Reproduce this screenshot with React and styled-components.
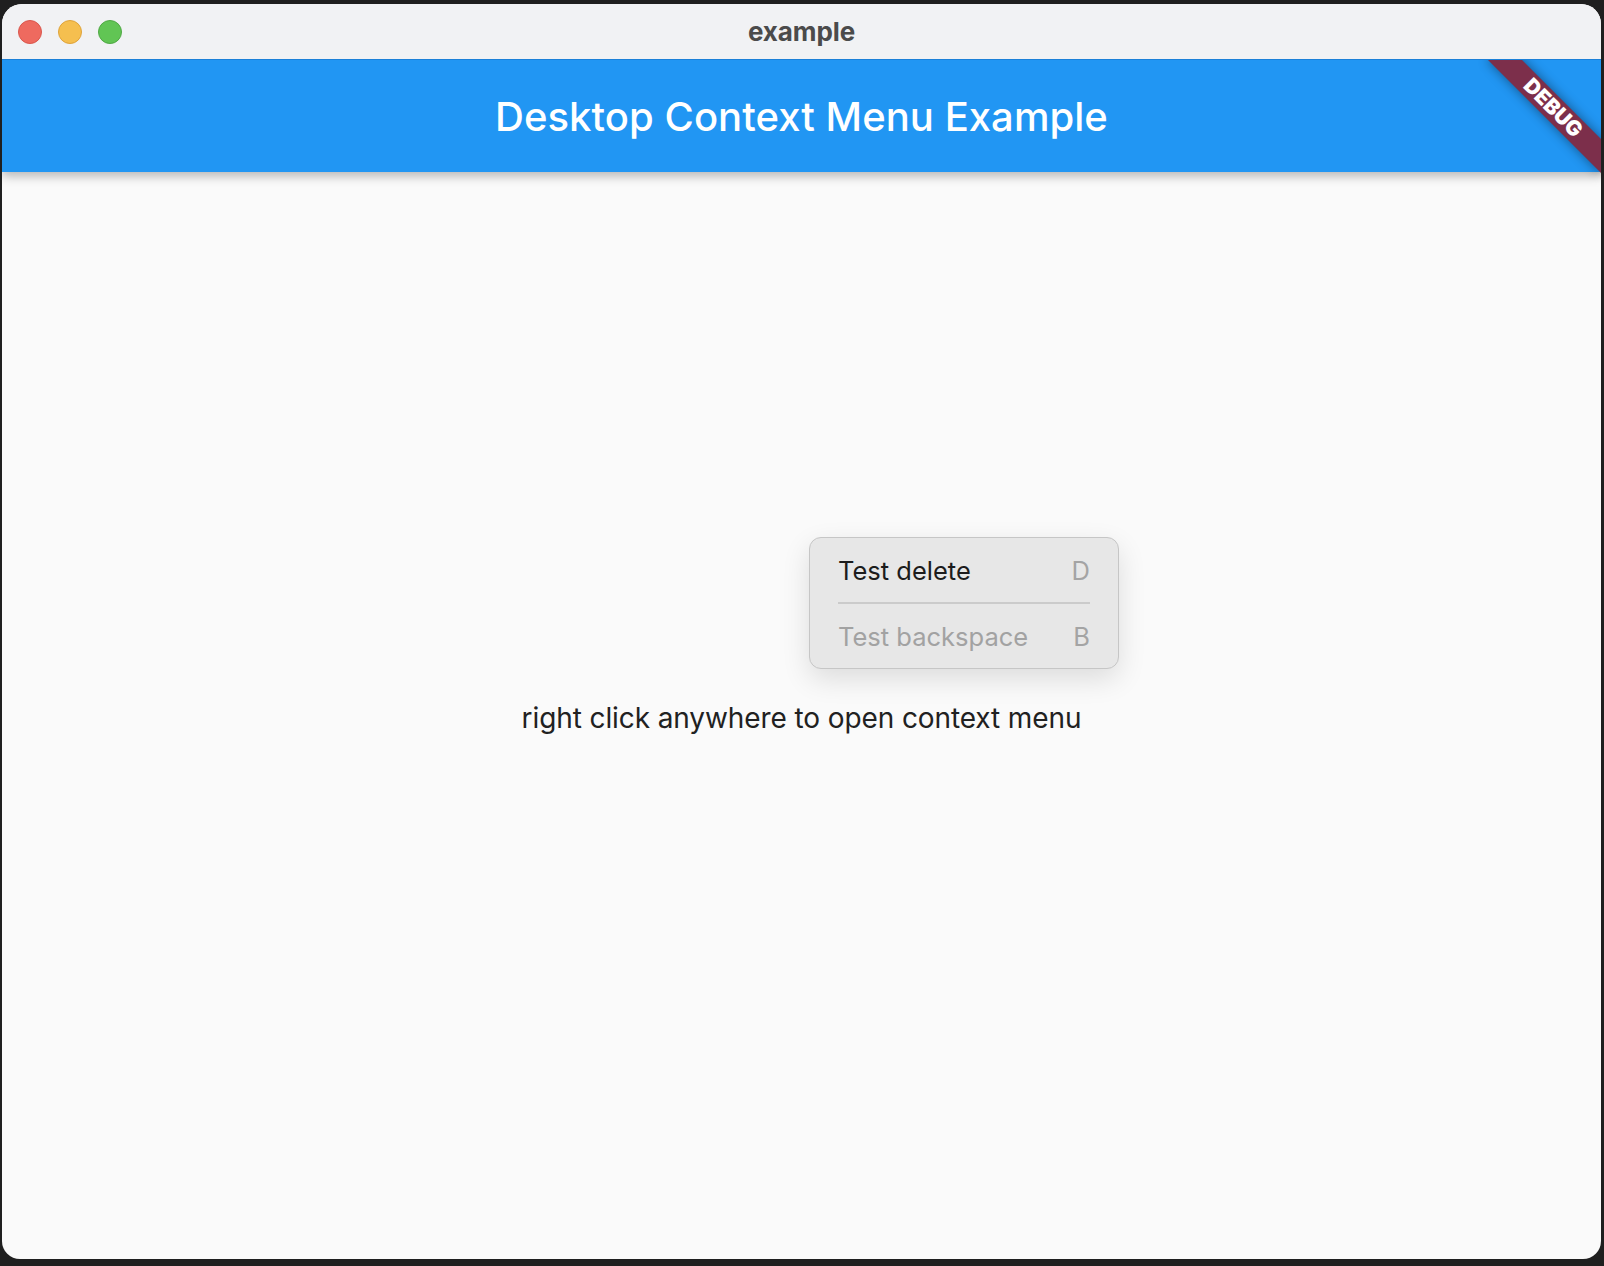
import React from 'react';
import styled, { createGlobalStyle } from 'styled-components';

const GlobalStyle = createGlobalStyle`
    html, body {
        margin: 0;
        padding: 0;
        background: #1f1f1f;
        font-family: Inter, "Noto Sans", sans-serif;
    }
`;

const lights = ['#ee6a5f', '#f5bf4f', '#61c554'];
const lightBorders = ['#d9574d', '#dea33b', '#50a845'];

const menuItems = [
    { label: 'Test delete', shortcut: 'D', disabled: false },
    { label: 'Test backspace', shortcut: 'B', disabled: true },
];

export default function App() {
    return (
        <>
            <GlobalStyle />
            <Window>
                <TitleBar>
                    <Lights>
                        {lights.map((c, i) => (
                            <Light key={c} $color={c} $border={lightBorders[i]} />
                        ))}
                    </Lights>
                    <WindowTitle>example</WindowTitle>
                    <span />
                </TitleBar>
                <Content>
                    <AppBar>
                        <AppTitle>Desktop Context Menu Example</AppTitle>
                    </AppBar>
                    <Body>
                        <Hint>right click anywhere to open context menu</Hint>
                    </Body>
                    <Menu>
                        {menuItems.map((item, i) => (
                            <React.Fragment key={item.label}>
                                {i > 0 && <Separator />}
                                <MenuRow>
                                    <MenuLabel $disabled={item.disabled}>{item.label}</MenuLabel>
                                    <Shortcut>{item.shortcut}</Shortcut>
                                </MenuRow>
                            </React.Fragment>
                        ))}
                    </Menu>
                    <Banner>DEBUG</Banner>
                </Content>
            </Window>
        </>
    );
}

const Window = styled.div`
    margin: 4px 3px 0 2px;
    width: 1599px;
    height: 1255px;
    border-radius: 20px 20px 18px 18px;
    overflow: hidden;
    display: flex;
    flex-direction: column;
    background: #fafafa;
`;

const TitleBar = styled.div`
    height: 56px;
    flex-shrink: 0;
    background: #f1f2f4;
    display: grid;
    grid-template-columns: 1fr auto 1fr;
    align-items: center;
    border-bottom: 1px solid #1b80d8;
    box-sizing: border-box;
`;

const Lights = styled.div`
    display: flex;
    gap: 16px;
    padding-left: 16px;
`;

const Light = styled.div`
    width: 24px;
    height: 24px;
    border-radius: 50%;
    box-sizing: border-box;
    background: ${(p) => p.$color};
    border: 1px solid ${(p) => p.$border};
`;

const WindowTitle = styled.div`
    font-size: 26px;
    font-weight: 700;
    color: #4b4b4b;
    letter-spacing: -0.1px;
`;

const Content = styled.div`
    flex: 1;
    position: relative;
    overflow: hidden;
    display: flex;
    flex-direction: column;
`;

const AppBar = styled.div`
    height: 112px;
    flex-shrink: 0;
    background: #2196f3;
    display: flex;
    align-items: center;
    justify-content: center;
    box-shadow: 0 4px 10px rgba(0, 0, 0, 0.28);
    position: relative;
    z-index: 1;
`;

const AppTitle = styled.div`
    font-size: 40px;
    font-weight: 500;
    color: #ffffff;
    letter-spacing: 0.05px;
`;

const Body = styled.div`
    flex: 1;
    display: flex;
    align-items: center;
    justify-content: center;
    padding-top: 4px;
`;

const Hint = styled.div`
    font-size: 28px;
    color: #212121;
    letter-spacing: -0.1px;
`;

const Menu = styled.div`
    position: absolute;
    left: 807px;
    top: 477px;
    width: 310px;
    box-sizing: border-box;
    background: #e7e7e7;
    border: 1px solid #c6c6c6;
    border-radius: 12px;
    box-shadow: 0 10px 28px rgba(0, 0, 0, 0.12);
    z-index: 2;
`;

const MenuRow = styled.div`
    height: 64px;
    display: flex;
    align-items: center;
    justify-content: space-between;
    padding: 0 28px 0 28px;
    font-size: 25.5px;
`;

const MenuLabel = styled.span`
    color: ${(p) => (p.$disabled ? '#a2a2a2' : '#1c1c1c')};
`;

const Shortcut = styled.span`
    color: #a4a4a4;
`;

const Separator = styled.div`
    height: 2px;
    margin: 0 28px 0 28px;
    background: #cbcbcb;
`;

const Banner = styled.div`
    position: absolute;
    top: 36px;
    right: -32px;
    width: 160px;
    height: 24px;
    transform: rotate(45deg);
    background: #7c2f4b;
    box-shadow: 0 0 12px rgba(0, 0, 0, 0.45);
    color: #ffffff;
    font-size: 21px;
    font-weight: 900;
    line-height: 24px;
    text-align: center;
    z-index: 3;
`;
